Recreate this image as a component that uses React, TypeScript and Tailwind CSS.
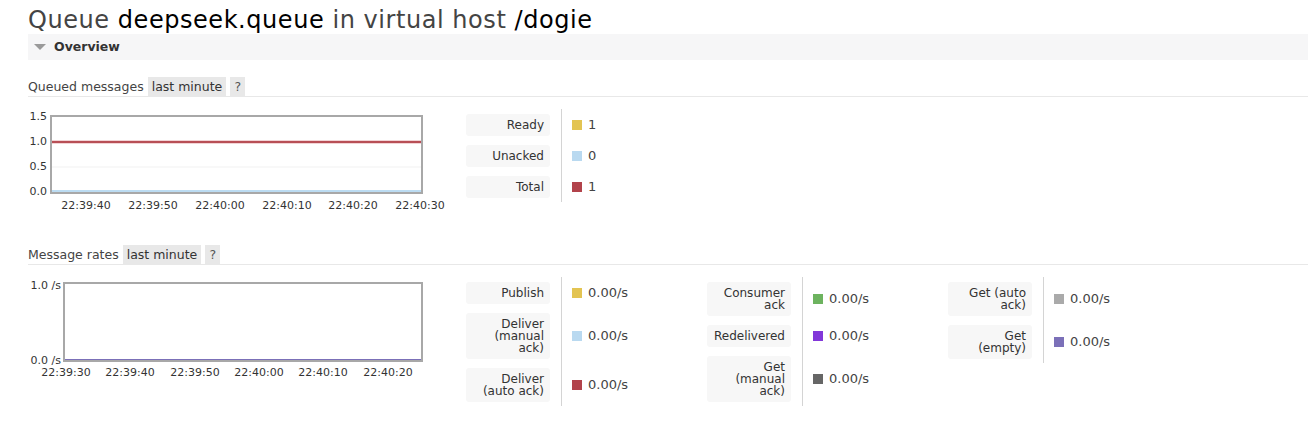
type Row = { label: string; color: string; value: string };

const queued: Row[] = [
  { label: "Ready", color: "bg-[#e3c452]", value: "1" },
  { label: "Unacked", color: "bg-[#b9d9f0]", value: "0" },
  { label: "Total", color: "bg-[#b2434b]", value: "1" },
];

const rates: Row[][] = [
  [
    { label: "Publish", color: "bg-[#e3c452]", value: "0.00/s" },
    { label: "Deliver (manual ack)", color: "bg-[#b9d9f0]", value: "0.00/s" },
    { label: "Deliver (auto ack)", color: "bg-[#b2434b]", value: "0.00/s" },
  ],
  [
    { label: "Consumer ack", color: "bg-[#6db35f]", value: "0.00/s" },
    { label: "Redelivered", color: "bg-[#8237d9]", value: "0.00/s" },
    { label: "Get (manual ack)", color: "bg-[#666666]", value: "0.00/s" },
  ],
  [
    { label: "Get (auto ack)", color: "bg-[#aaaaaa]", value: "0.00/s" },
    { label: "Get (empty)", color: "bg-[#7b70b8]", value: "0.00/s" },
  ],
];

function Legend({ rows }: { rows: Row[] }) {
  return (
    <div className="w-[241px] shrink-0 self-start">
      {rows.map((r) => (
        <div key={r.label} className="flex">
          <div className="w-[95px] shrink-0 py-[4.5px]">
            <div className="w-[84px] rounded-[3px] bg-[#f7f7f7] px-[6px] py-[5px] text-right text-[12px] leading-[12px] text-[#333]">
              {r.label}
            </div>
          </div>
          <div className="flex items-center gap-[6px] border-l border-[#d4d4d4] pl-[10px] text-[13px] text-[#444]">
            <span className={`block size-[10px] ${r.color}`} />
            {r.value}
          </div>
        </div>
      ))}
    </div>
  );
}

function Heading({ title }: { title: string }) {
  return (
    <div className="flex items-end gap-[4px] border-b border-[#e8e8e8] text-[12.5px] leading-[19px] text-[#444]">
      <span className="pr-[0px]">{title}</span>
      <span className="bg-[#e8e8e8] px-[4px] text-[#333]">last minute</span>
      <span className="w-[15px] bg-[#e8e8e8] text-center text-[#555]">?</span>
    </div>
  );
}

function QueuedChart() {
  const ticks: [string, number][] = [
    ["22:39:40", 58],
    ["22:39:50", 125],
    ["22:40:00", 192],
    ["22:40:10", 259],
    ["22:40:20", 325],
    ["22:40:30", 392],
  ];
  const ys: [string, number][] = [
    ["1.5", 8],
    ["1.0", 33],
    ["0.5", 58],
    ["0.0", 83],
  ];
  return (
    <svg width="438" height="104" className="block shrink-0">
      <line x1="23" x2="394" y1="58" y2="58" stroke="#f1f1f1" strokeWidth="1" />
      <line x1="23" x2="394" y1="82" y2="82" stroke="#bcdcf2" strokeWidth="2" />
      <line x1="23" x2="394" y1="33" y2="33" stroke="#e6a9ad" strokeWidth="3" />
      <line x1="23" x2="394" y1="33" y2="33" stroke="#a8323a" strokeWidth="1.6" />
      <rect x="23" y="7" width="371" height="77" fill="none" stroke="#a8a8a8" strokeWidth="2" />
      {ys.map(([t, y]) => (
        <text key={t} x="19" y={y} textAnchor="end" dominantBaseline="middle" fontSize="11" fill="#333">
          {t}
        </text>
      ))}
      {ticks.map(([t, x]) => (
        <text key={t} x={x} y="97" textAnchor="middle" dominantBaseline="middle" fontSize="11" fill="#333">
          {t}
        </text>
      ))}
    </svg>
  );
}

function RatesChart() {
  const ticks: [string, number][] = [
    ["22:39:30", 38],
    ["22:39:40", 102],
    ["22:39:50", 167],
    ["22:40:00", 231],
    ["22:40:10", 295],
    ["22:40:20", 360],
  ];
  return (
    <svg width="438" height="104" className="block shrink-0">
      <line x1="36" x2="394" y1="83" y2="83" stroke="#7b70b8" strokeWidth="2" />
      <rect x="36" y="6" width="358" height="78" fill="none" stroke="#a8a8a8" strokeWidth="2" />
      <text x="33" y="9" textAnchor="end" dominantBaseline="middle" fontSize="11" fill="#333">
        1.0 /s
      </text>
      <text x="33" y="84" textAnchor="end" dominantBaseline="middle" fontSize="11" fill="#333">
        0.0 /s
      </text>
      {ticks.map(([t, x]) => (
        <text key={t} x={x} y="96" textAnchor="middle" dominantBaseline="middle" fontSize="11" fill="#333">
          {t}
        </text>
      ))}
    </svg>
  );
}

export default function App() {
  return (
    <div className="h-[422px] w-[1308px] overflow-hidden bg-white pl-[28px] font-['DejaVu_Sans',Verdana,sans-serif]">
      <h1 className="h-[34px] pt-[6px] text-[24px] leading-[28px] tracking-[0.55px] whitespace-nowrap text-[#444]">
        Queue <span className="text-black">deepseek.queue</span> in virtual host <span className="text-black">/dogie</span>
      </h1>

      <div className="flex h-[26px] items-center bg-[#f6f6f7]">
        <span className="ml-[6px] h-0 w-0 border-x-[6px] border-t-[6px] border-x-transparent border-t-[#9a9a9a]" />
        <span className="ml-[8px] text-[12.5px] font-bold text-[#333]">Overview</span>
      </div>

      <div className="mt-[17px]">
        <Heading title="Queued messages" />
      </div>
      <div className="mt-[12px] flex">
        <QueuedChart />
        <Legend rows={queued} />
      </div>

      <div className="mt-[32px]">
        <Heading title="Message rates" />
      </div>
      <div className="mt-[12px] flex">
        <RatesChart />
        {rates.map((col, i) => (
          <Legend key={i} rows={col} />
        ))}
      </div>
    </div>
  );
}
